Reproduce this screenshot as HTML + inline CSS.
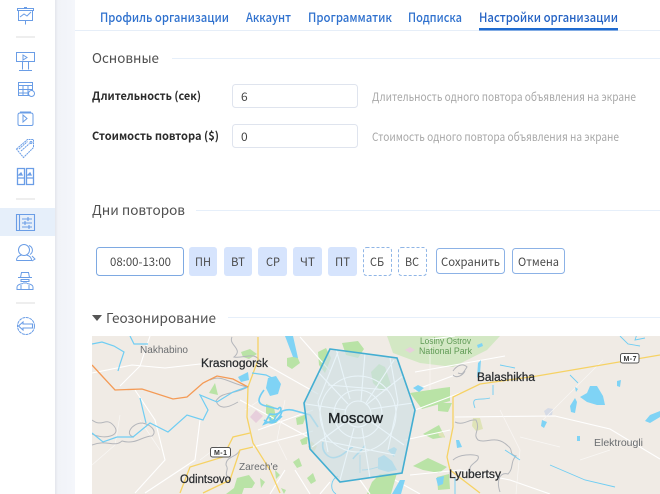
<!DOCTYPE html>
<html lang="ru"><head><meta charset="utf-8"><title>Настройки организации</title>
<style>
html,body{margin:0;padding:0;background:#fff;width:660px;height:494px;overflow:hidden}
svg{position:absolute;left:0;top:0;display:block}
text{font-family:"Noto Sans CJK SC","Liberation Sans",sans-serif}
.m text{font-family:"Liberation Sans",sans-serif}
.ic{fill:none;stroke:#6a9de6;stroke-width:1}
</style></head><body>
<svg width="660" height="494" viewBox="0 0 660 494" xmlns="http://www.w3.org/2000/svg">
<defs>
<linearGradient id="g" x1="0" x2="1" y1="0" y2="0"><stop offset="0" stop-color="#e4e6ec"/><stop offset=".15" stop-color="#f1f3f8"/><stop offset="1" stop-color="#f4f6fb"/></linearGradient>
<clipPath id="mc"><rect x="92" y="336" width="568" height="158"/></clipPath>
</defs>
<rect x="55" y="0" width="20" height="494" fill="url(#g)"/>
<!-- sidebar -->
<rect x="0" y="208" width="55" height="28" fill="#e6effa"/>
<rect x="16" y="36" width="19" height="2" fill="#eeeeee"/><rect x="16" y="198" width="19" height="2" fill="#eeeeee"/><rect x="16" y="302" width="19" height="2" fill="#eeeeee"/>
<g class="ic">
<path d="M17.500 8.500h16v2h-16zM18.500 10.500v10h14v-10M25.500 20.500v4M24 7.500h3M20 17l4-3 3 2 4-4"/>
<path d="M16.500 52.500h18v9h-18zM22.500 61.500v8M28.500 61.500v8M19 70.500h13M23 55v5l4-2.500z"/>
<path d="M18.500 82.500h14v13h-14zM18.500 85.500h14M19 89.500h13M19 93h12M23 86v9M28 86v9"/><circle cx="31.500" cy="93.500" r="3" fill="#fff"/>
<path d="M18 115q0-2 2-2h11q2 0 2 2v9q0 1.500-1.500 1.500h-12q-1.500 0-1.500-1.500zM20 112h11M23 115v7l4-3.500z"/>
<path d="M16.500 149l11-9.500h6v8l-10 10zM19 149l8.500-7.500M21 151l8.500-7.500" stroke-dasharray="2 .6"/><circle cx="31" cy="142.500" r="1"/>
<path d="M17.500 168.500h7v16h-7zM26.500 168.500h7v16h-7zM21 173l1 2h-3zM30 173l1 2h-3zM18 178h6M27 178h6" stroke-width="1.300"/>
<path d="M16.500 214.500h18v16h-18zM19.500 215v15M22 219h10M22 223h10M22 227h10M28 217v4M25 221v4M29 225v4" stroke-width="1.100"/>
<circle cx="24" cy="250" r="5.500"/><path d="M16.500 260.500c0-4 3-5 5-5.500M26.500 255c2 .5 5 1.500 5 5.500h-15M29 245.500a5 5 0 0 1 1 9M32 256l3 3-3 2"/>
<path d="M21.500 272.500h7l1 5h-9zM18 277.500h14M21 279.500h8v2h-8zM23 283h4M17 290v-3c0-2 3-3 6-3.500M33 290v-3c0-2-3-3-6-3.500M17 289.500h16M21 285v4M29 285v4"/>
<circle cx="26" cy="326" r="8.500" stroke-dasharray="3 .6"/><path d="M23 322l-4.500 4 4.500 4v-2h9.500v-4H23z" stroke-width="1.100"/>
</g>
<!-- tabs -->
<rect x="75" y="30" width="585" height="1" fill="#e6eef8"/>
<g font-size="12.800" font-weight="500" fill="#2f71ce">
<text x="100" y="22" textLength="129" lengthAdjust="spacingAndGlyphs">Профиль организации</text>
<text x="246" y="22" textLength="45" lengthAdjust="spacingAndGlyphs">Аккаунт</text>
<text x="308" y="22" textLength="84" lengthAdjust="spacingAndGlyphs">Программатик</text>
<text x="408" y="22" textLength="54" lengthAdjust="spacingAndGlyphs">Подписка</text>
<text x="479" y="22" textLength="139" lengthAdjust="spacingAndGlyphs" fill="#2563c4">Настройки организации</text>
</g>
<rect x="479" y="28" width="139" height="2.500" fill="#1f6bd0"/>
<!-- headings -->
<g font-size="13.500" fill="#4f4f4f">
<text x="92" y="63" textLength="67" lengthAdjust="spacingAndGlyphs">Основные</text>
<text x="92" y="215" textLength="93" lengthAdjust="spacingAndGlyphs">Дни повторов</text>
<text x="106" y="323" textLength="110" lengthAdjust="spacingAndGlyphs">Геозонирование</text>
</g>
<rect x="172" y="58" width="488" height="1" fill="#e6effa"/>
<rect x="196" y="210" width="464" height="1" fill="#e6effa"/>
<rect x="228" y="317" width="432" height="1" fill="#e6effa"/>
<path d="M92 315h10l-5 6z" fill="#555"/>
<!-- form -->
<g font-size="11.500" font-weight="700" fill="#2c2c2c">
<text x="92" y="100" textLength="109" lengthAdjust="spacingAndGlyphs">Длительность (сек)</text>
<text x="92" y="140" textLength="127" lengthAdjust="spacingAndGlyphs">Стоимость повтора ($)</text>
</g>
<rect x="232.500" y="84.500" width="125" height="23" rx="3" fill="#fff" stroke="#dfe4ee"/>
<rect x="232.500" y="124.500" width="125" height="23" rx="3" fill="#fff" stroke="#dfe4ee"/>
<g font-size="12" fill="#444"><text x="241" y="101">6</text><text x="241" y="141">0</text></g>
<g font-size="11.500" fill="#a8a8a8">
<text x="372" y="101" textLength="264" lengthAdjust="spacingAndGlyphs">Длительность одного повтора объявления на экране</text>
<text x="372" y="141" textLength="247" lengthAdjust="spacingAndGlyphs">Стоимость одного повтора объявления на экране</text>
</g>
<!-- days -->
<rect x="96.500" y="247.500" width="87" height="28" rx="3" fill="#fff" stroke="#7ea9e2"/>
<g fill="#d6e4fd"><rect x="189" y="247" width="28" height="29" rx="3"/><rect x="224" y="247" width="28" height="29" rx="3"/><rect x="258" y="247" width="29" height="29" rx="3"/><rect x="293" y="247" width="29" height="29" rx="3"/><rect x="328" y="247" width="29" height="29" rx="3"/></g>
<g fill="#fff" stroke="#8fb5e6" stroke-dasharray="3 2"><rect x="363.500" y="247.500" width="28" height="28" rx="3"/><rect x="398.500" y="247.500" width="28" height="28" rx="3"/></g>
<g fill="#fff" stroke="#8cb2e6"><rect x="436.500" y="248.500" width="68" height="25" rx="3"/><rect x="512.500" y="248.500" width="52" height="25" rx="3"/></g>
<g font-size="11.500" fill="#4a4a4a">
<text x="110" y="266" textLength="61" lengthAdjust="spacingAndGlyphs">08:00-13:00</text>
<text x="195" y="266" textLength="16" lengthAdjust="spacingAndGlyphs">ПН</text>
<text x="231" y="266" textLength="14" lengthAdjust="spacingAndGlyphs">ВТ</text>
<text x="266" y="266" textLength="14" lengthAdjust="spacingAndGlyphs">СР</text>
<text x="300" y="266" textLength="15" lengthAdjust="spacingAndGlyphs">ЧТ</text>
<text x="335" y="266" textLength="15" lengthAdjust="spacingAndGlyphs">ПТ</text>
<text x="370" y="266" textLength="14" lengthAdjust="spacingAndGlyphs">СБ</text>
<text x="405" y="266" textLength="14" lengthAdjust="spacingAndGlyphs">ВС</text>
<text x="441" y="266" textLength="59" lengthAdjust="spacingAndGlyphs">Сохранить</text>
<text x="518" y="266" textLength="41" lengthAdjust="spacingAndGlyphs">Отмена</text>
</g>
<!-- map -->
<g clip-path="url(#mc)" class="m">
<rect x="92" y="336" width="568" height="158" fill="#f0ebe5"/>
<path d="M387 336h113l-13 14-34 17-33-4-27-10z" fill="#d3e8c4"/>
<g fill="#b9e3a6">
<path d="M241 352l9-3 7 5-8 5-6-2zM287 358l10-2 3 7-8 6-5-3zM209 393l6-10 3 12zM266 404l8 3 3 17-7-2-4-9zM296 418l11-4-4 10-6 1zM342 343l16-2 6 8-6 9-12-3zM371 372l8-8 6 3 6 18-10 6-8-8zM318 352l8-4 5 10-6 15-6-8zM410 393l32-5 8-1v14l-28 8zM438 403h14l-4 9-10-1zM423 434l16-9 6 12-12 2zM300 440l8-4-1 8-5 1zM293 462l6-4 3 8-5 2zM307 478l6-5 3 8-5 3zM372 482l8-8 17-1-6 21h-24zM413 466l15-8 19 9-8 6-16-3zM437 477l12-3 1 15-12 1zM237 478l12-3 6 8-3 5-8 0-2 6-16 0 8-6zM260 478l5 4-4 6zM275 470l5 5-4 4zM281 488l5 2-2 4z"/>
</g>
<path d="M473 418l7 0 3 11-7 2-4-5zM438 432l5 1 2 5-6-2z" fill="#dfe3b8"/>
<path d="M311 441l6 5-3 6-6-5z" fill="#e0dcb0"/>
<path d="M250 417l6-7 7 6-7 7zM405 350l5-3 5 3-5 3z" fill="#e7cfdc"/>
<path d="M544 411l4-3 5 1-1 6-6 1z" fill="#d6dbe6"/>
<!-- white roads -->
<g fill="none" stroke="#fff" stroke-width="1.100">
<path d="M92 373l40-8 33 3 35-4 35 3M258 360l60 34M240 400l70 38M258 430l55-20M253 447l60-16M150 336l-10 30-20 20M135 390l20 30 10 40-30 33M200 420l-5 40-50 33M300 337l30 34M415 372l90-16M415 390l40-15M405 440l45-10M415 410l45-17M455 417l100-1 55 13 50 30M425 340l30-4M330 482l-10 12M360 480l10 14M395 480l25 14M410 475l50-5 50 10 40 14M285 470l-15 24M295 470l15 24"/>
<path d="M200 460l20-15M160 450l-20-30M120 415l-5 30-23 20M260 400l-15 10M285 400l-8 40 10 20M430 340l0 50M500 410l20 40-4 44M603 360l-60 60M520 437l40 10M580 460l30-10" stroke-width=".7" stroke="#f9f7f5"/>
</g>
<!-- gray border -->
<g fill="none" stroke="#b4b6bb" stroke-width="1">
<path d="M92 420c10 8 14-4 22 6s-10 14-22 8M92 445c15-6 22 3 30-4 14 4 20-5 30-5 6-5-2-12-10-13-10 0-18 12-8 14M210 380c12-6 20 4 38 7-14 8-26 4-32 14 3 8 10 8 22 1M232 337c-4 8 12 12 2 20 10 2 20-6 26 4M240 450c-4 8-14 6-14 15 4 6-4 8 4 14M453 371c4-6 10-8 14-4-4 6-4 8-9 6M453 375c4 4 10 0 12-4M455 422c8 4 14-3 21-2 5 10-4 14 2 20 8 4 18-6 30 6 6 4 0 8 8 10-6 6-2 12-8 18-8-2-12 6-8 18M453 460c6-6 20-6 25-4 3 6-12 8-7 16"/>
</g>
<g fill="none" stroke="#f6d264" stroke-width="1.300">
<path d="M258 337v23l-10 27-1 30 6 26 17 27 10 23M180 493l10-26 33-10 10-20 17-4M203 493l27-13 10-30 13-3M660 355l-123 21-57 8-27 13v30l-6 30 3 13 30 23"/>
</g>
<path d="M92 365l11 12 12 13 27-1 31 10 14-2 16-14 14-7 16 3 15 8" fill="none" stroke="#f49a55" stroke-width="1.300"/>
<!-- water -->
<g fill="none" stroke="#6fcdf3" stroke-width="1.200">
<path d="M92 344l10-2 12 4 10 6-4 12-2 7M130 336l4 8 14 0M92 433l11 9 14-5 16 0 17-14 18 9 19-17 16 5 5-10-8-15 17 7 16-10 14-5M140 398l6 25M252 373l14 2 10 5"/>
<path d="M264 390c-6 8-8 14 2 16l12 3c4-6 6 8-8 5l-6 10 10-4c4-10 14-12 22-9l14 4 8 12M270 417c2 10 10 0 12-5M264 420c8 6 12 2 18-4M323 442c-2 10 6 18 14 15 8-2 10-8 16-10M365 445c-2 5-10 10-12 14" stroke-width="1.600"/>
<path d="M360 455v18M362 470c12 0 14-4 20-3M338 476c-8 4-8 14-2 18M645 338l-10 2 2-6M620 336l8 8 12 2M570 375l8 8M493 385v10M500 365l15 3M490 398c-10 3-20-3-15 10M505 450l15 10M550 465l35 15 30 7M455 478v16" stroke-width=".9"/>
</g>
<g fill="#7fd3f5">
<path d="M285 336l8 0 5 22-5-1zM238 377l10-5 1 8-8 2zM268 378l8-2 5 8-3 10-8 2-4-8zM580 397l7-4 3-7 7 0 6 10 2 9-8 0-10-3zM570 406l5-8 2 4-2 11-4-1zM575 387l3 2-2 3zM478 363l3-3-1 14-3 4zM617 381l4-1-1 7-3-1zM577 436l3 0 0 5-3 0zM650 415l10-4v6l-10 6-5-2zM388 450l6-3 3 2-3 8zM542 420l5 2-3 6-3-2zM413 388l5-3 6 3-5 4zM456 440l3 0 3 7-5 1zM378 458l6-3 8 6 5 9-9 2-10-3zM436 478l8-2-1 8-5 2zM477 345l5-2 1 3-5 2zM400 480l5 0-4 14h-9z"/>
</g>
<!-- zone -->
<path d="M330 349l67 9 18 52-13 63-62 9-30-33-6-46z" fill="#cfe0e4" fill-opacity=".7"/>
<g fill="none" stroke="#e9f4f9" stroke-width="1.100">
<circle cx="358" cy="414" r="13"/><circle cx="358" cy="414" r="24"/><circle cx="358" cy="414" r="38"/>
<path d="M336 349l14 50M365 353l-4 48M394 360l-28 43M413 403l-42 6M404 445l-34-24M370 478l-8-50M340 480l14-52M312 447l34-25M306 404l40 6M318 372l30 32M404 375l-38 30M338 352l-20 50 10 50M390 358l8 44-10 48M328 385l60 5M320 440l75 15"/>
</g>
<path d="M330 349l67 9 18 52-13 63-62 9-30-33-6-46z" fill="none" stroke="#43aed2" stroke-width="1.600"/>
<!-- labels -->
<g>
<text x="328" y="423" font-size="14.500" textLength="55" lengthAdjust="spacingAndGlyphs" fill="#1e2326" stroke="#1e2326" stroke-width=".35">Moscow</text>
<g font-size="11.500" fill="#2a2d30" stroke="#2a2d30" stroke-width=".25">
<text x="201" y="367" textLength="67" lengthAdjust="spacingAndGlyphs">Krasnogorsk</text>
<text x="180" y="483" textLength="51" lengthAdjust="spacingAndGlyphs">Odintsovo</text>
<text x="477" y="381" textLength="58" lengthAdjust="spacingAndGlyphs">Balashikha</text>
<text x="449" y="478" textLength="52" lengthAdjust="spacingAndGlyphs">Lyubertsy</text>
</g>
<g font-size="10.500" fill="#6a6d70">
<text x="140" y="353" textLength="48" lengthAdjust="spacingAndGlyphs">Nakhabino</text>
<text x="239" y="470" textLength="39" lengthAdjust="spacingAndGlyphs">Zarech'e</text>
<text x="594" y="446" textLength="49" lengthAdjust="spacingAndGlyphs">Elektrougli</text>
</g>
<g font-size="9" fill="#5f9a55">
<text x="420" y="344" textLength="51" lengthAdjust="spacingAndGlyphs">Losiny Ostrov</text>
<text x="419" y="354" textLength="53" lengthAdjust="spacingAndGlyphs">National Park</text>
</g>
<g><rect x="210.500" y="447.500" width="20" height="9.500" rx="2" fill="#fff" stroke="#555"/><text x="214" y="455" font-size="7" font-weight="700" fill="#333" textLength="13">M-1</text>
<rect x="620.500" y="353.500" width="18.500" height="9.500" rx="2" fill="#fff" stroke="#555"/><text x="623.500" y="361" font-size="7" font-weight="700" fill="#333" textLength="13">M-7</text></g>
</g>
</g>
</svg>
</body></html>
